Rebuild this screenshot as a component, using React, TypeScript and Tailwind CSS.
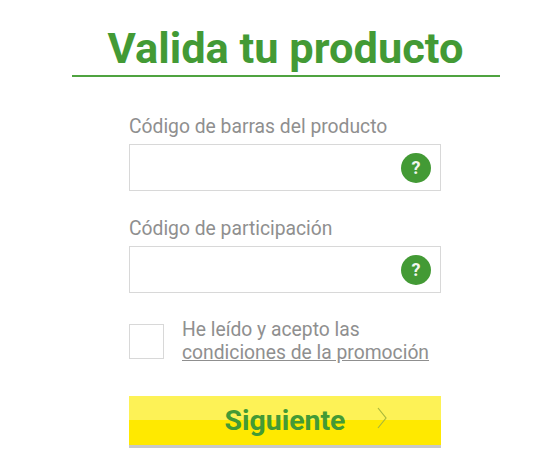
import React from 'react';

const HelpBadge = () => (
  <span className="flex h-[30px] w-[30px] items-center justify-center rounded-full bg-[#439a35] text-[18px] font-bold text-[#f2f7ee]">
    ?
  </span>
);

const CodeField = ({ label }: { label: string }) => (
  <div>
    <label className="block text-[19.3px] leading-[24px] text-[#8f8f8f]">{label}</label>
    <div className="mt-[5px] flex h-[47px] items-center justify-end border border-[#d8d8d8] bg-white pr-[9px]">
      <HelpBadge />
    </div>
  </div>
);

export default function App() {
  return (
    <div className="flex h-[468px] w-[540px] flex-col items-center overflow-hidden bg-white font-['Roboto',sans-serif]">
      <div className="ml-[31px] mt-[25px] w-[428px] border-b-2 border-[#4fa340] pb-[2px] text-center">
        <h1 className="text-[43.4px] font-bold leading-[48px] text-[#439a35]">Valida tu producto</h1>
      </div>
      <form className="ml-[30px] mt-[38px] flex w-[312px] flex-col">
        <CodeField label="Código de barras del producto" />
        <div className="mt-[26px]">
          <CodeField label="Código de participación" />
        </div>
        <div className="mt-[31px] flex items-start">
          <span className="h-[35px] w-[35px] border border-[#d8d8d8] bg-white" />
          <p className="ml-[18px] -mt-[6px] text-[19.3px] leading-[23px] text-[#8f8f8f]">
            He leído y acepto las
            <br />
            <a className="underline">condiciones de la promoción</a>
          </p>
        </div>
        <button
          type="button"
          className="mt-[32px] flex h-[52px] items-center justify-center border-b-[3px] border-[#c9c9c9] bg-[linear-gradient(#fdf256_0,#fdf256_24px,#ffe900_24px)] pt-[1px]"
        >
          <span className="relative text-[28.4px] font-bold text-[#439a35]">
            Siguiente
            <svg className="absolute left-[152px] top-[7px]" width="10" height="22" viewBox="0 0 10 22" fill="none">
              <path d="M1 1l8 10-8 10" stroke="#a9b83a" strokeWidth="1.2" />
            </svg>
          </span>
        </button>
      </form>
    </div>
  );
}
